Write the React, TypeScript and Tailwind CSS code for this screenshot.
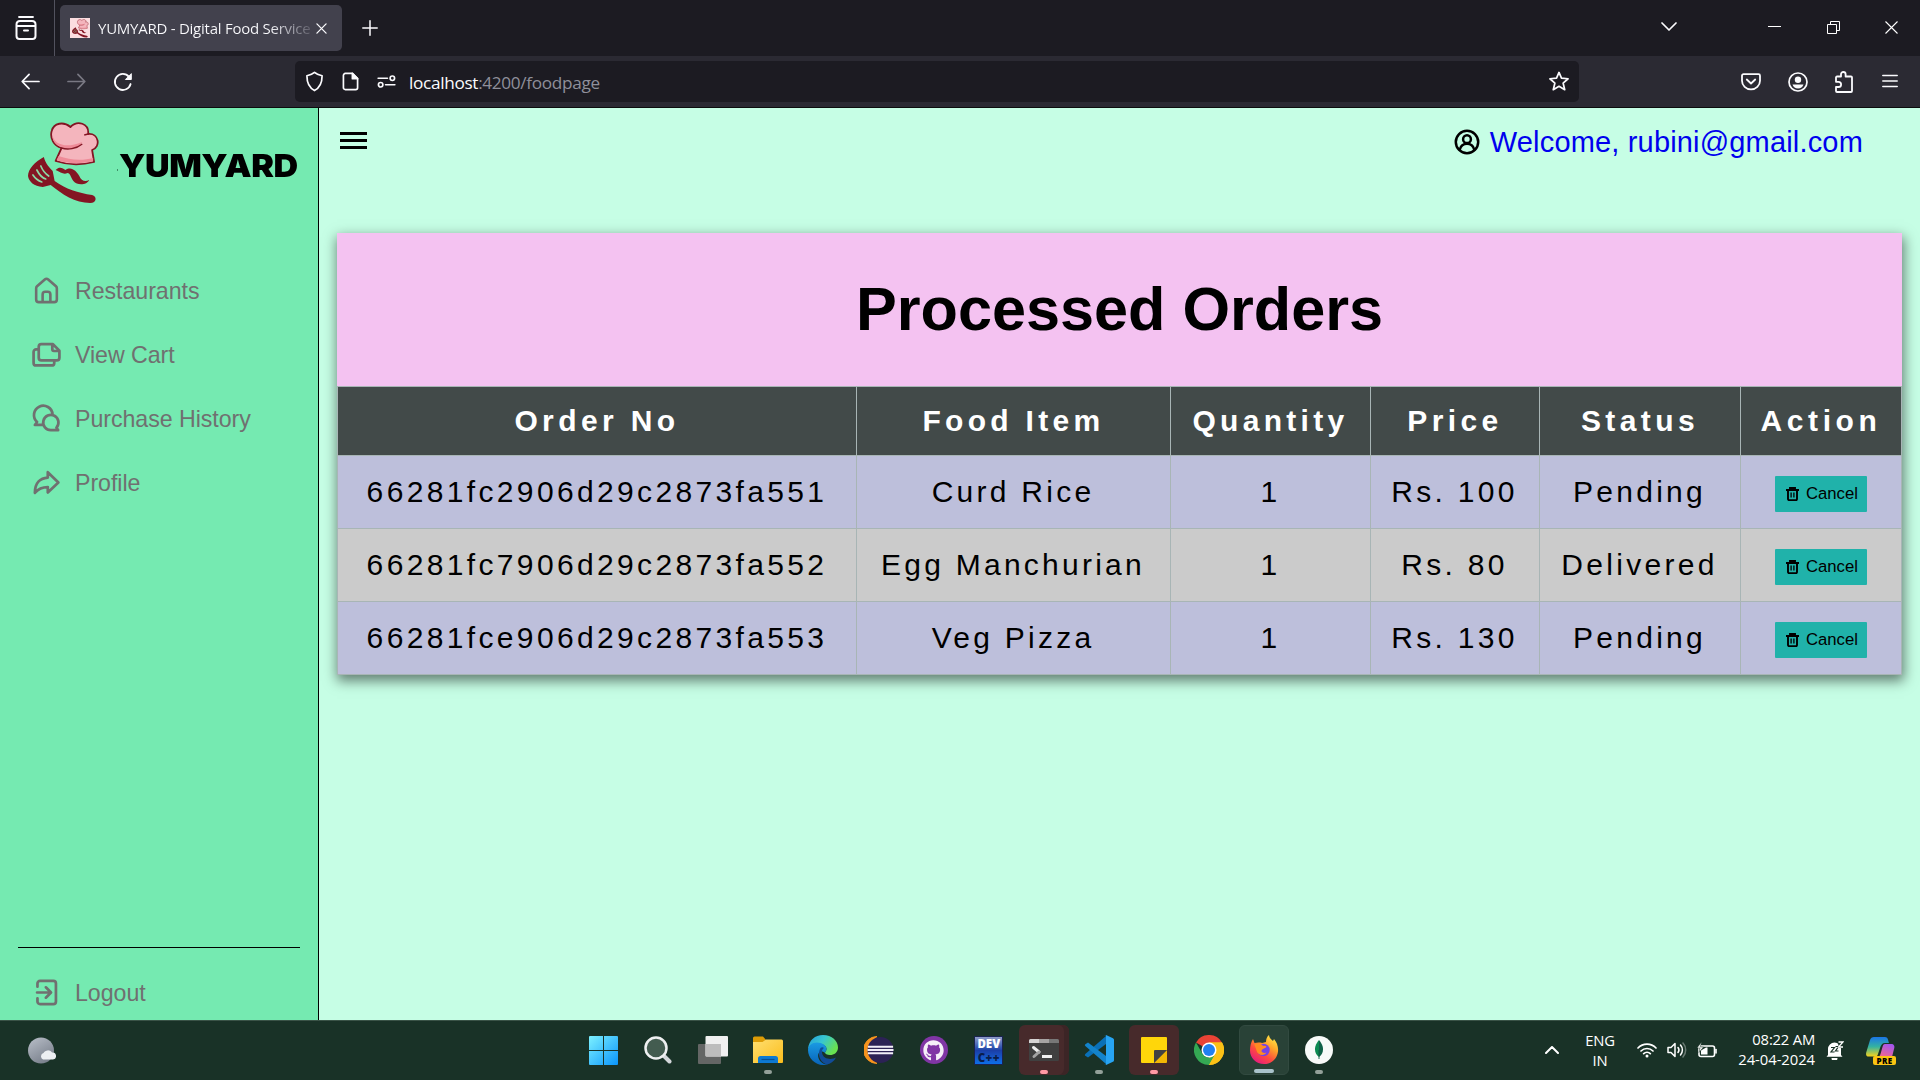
import React from "react";
import { FaGithub } from "react-icons/fa";

const line = {
  fill: "none",
  stroke: "currentColor",
  strokeWidth: 2,
  strokeLinecap: "round" as const,
  strokeLinejoin: "round" as const,
};

/* ---------- Logo ---------- */

function ChefLogo({ className }: { className: string }) {
  return (
    <svg viewBox="0 0 74 84" preserveAspectRatio="none" className={className}>
      <path
        d="M28 40 L34 27 C26 25 22 17 24 10 C26 2 36 0 43 6 C50 -1 62 2 61 13 C72 12 74 26 65 29 L67 41 C55 44 40 44 28 40Z"
        fill="#f4b5bd"
        stroke="#841523"
        strokeWidth="1.8"
        strokeLinejoin="round"
      />
      <path d="M25 15 C27 23 38 28 55 21 C50 28 40 29 34 26 C28 24 25 20 25 15Z M31 35 C42 39 55 40 66 37 L66 40 C55 43 40 43 29 39Z" fill="#ee8b98" />
      <path d="M34 27 C40 29 49 28 55 23 M61 13 L57 14" fill="none" stroke="#841523" strokeWidth="1.4" />
      <path d="M28 49 C32 45 35 47 38 49 C44 45 49 50 52 55 C54 60 58 61 62 59 C60 64 50 65 46 60 C43 56 43 52 40 52 C36 54 33 51 28 49Z" fill="#841523" />
      <path
        d="M16 36 C7 41 0 48 0 55 C1 61 6 65 15 66 L23 64 C34 73 48 82 63 82 C70 82 70 75 65 74 C51 72 38 68 27 60 L25 50 C22 47 18 43 16 36Z"
        fill="#841523"
      />
      <path d="M5 54 C7 57 11 60 14 61 M9 49 C11 53 15 57 18 58 M13 45 C15 50 18 53 21 55" fill="none" stroke="#8bd9a5" strokeWidth="1.7" strokeLinecap="round" />
    </svg>
  );
}

/* ---------- Browser chrome ---------- */

function TabBar() {
  return (
    <div className="flex h-14 w-full shrink-0 items-center bg-[#1c1b22] text-[#fbfbfe]">
      <div className="flex h-full w-[55px] shrink-0 items-center justify-center border-r border-[#52525e] pr-[3px]">
        <svg viewBox="0 0 22 24" className="h-6 w-[22px]" {...line}>
          <path d="M4 1h14" strokeWidth="1.8" />
          <path d="M1.500 8.500C1.500 6 3 5 5 5h12c2 0 3.500 1 3.500 3.500V20a3 3 0 0 1-3 3h-13a3 3 0 0 1-3-3zM1.500 10h19M9 14.500h4" />
        </svg>
      </div>
      <div className="ml-[5px] flex h-[46px] w-[282px] items-center rounded-[5px] bg-[#42414d] pl-[10px]">
        <div className="flex h-5 w-5 items-center justify-center bg-[#fbdde0]">
          <ChefLogo className="h-[19px] w-[17px]" />
        </div>
        <div className="ml-2 w-[214px] overflow-hidden whitespace-nowrap bg-gradient-to-r from-[#fbfbfe] from-80% to-[#5b5a66] bg-clip-text font-['Open_Sans',sans-serif] text-[15px] leading-6 tracking-[-0.25px] text-transparent">
          YUMYARD - Digital Food Service
        </div>
        <svg viewBox="0 0 12 12" className="ml-1 h-[11px] w-[11px] shrink-0" {...line} strokeWidth="1.4">
          <path d="M1 1l10 10M11 1L1 11" />
        </svg>
      </div>
      <svg viewBox="0 0 16 16" className="ml-5 h-4 w-4" {...line} strokeWidth="1.5">
        <path d="M8 .8v14.4M.8 8h14.4" />
      </svg>
      <div className="grow" />
      <svg viewBox="0 0 16 10" className="mr-[91px] mb-[2px] h-[10px] w-4" {...line} strokeWidth="1.7">
        <path d="M1 1l7 7 7-7" />
      </svg>
      <svg viewBox="0 0 13 13" className="mb-[3px] mr-[46px] h-[13px] w-[13px]">
        <path d="M0 6.5h13" stroke="#fff" strokeWidth="1" />
      </svg>
      <svg viewBox="0 0 13 13" className="mb-px mr-[45px] h-[13px] w-[13px]" fill="none" stroke="#fff">
        <path d="M.5 3.5h9v9h-9zM3.5 3.500V.5h9v9h-3" />
      </svg>
      <svg viewBox="0 0 13 13" className="mb-px mr-[22px] h-[13px] w-[13px]" fill="none" stroke="#fff" strokeWidth="1.1">
        <path d="M.5 .5l12 12M12.500 .5l-12 12" />
      </svg>
    </div>
  );
}

function ToolBar() {
  return (
    <div className="flex h-[52px] w-full shrink-0 items-center border-b border-[#0c0c0d] bg-[#2b2a33] text-[#fbfbfe]">
      <svg viewBox="0 0 20 18" className="ml-[21px] h-[17px] w-[19px]" {...line} strokeWidth="1.8">
        <path d="M19 9H1.500M8.500 1.500L1.200 9l7.300 7.500" />
      </svg>
      <svg viewBox="0 0 20 18" className="ml-[27px] h-[17px] w-[19px] text-[#797883]" {...line} strokeWidth="1.8">
        <path d="M1 9h17.500M11.500 1.500L18.800 9l-7.300 7.500" />
      </svg>
      <svg viewBox="0 0 20 20" className="ml-[27px] h-5 w-5" {...line} strokeWidth="1.8">
        <path d="M17.600 12A8 8 0 1 1 16 4.800" />
        <path d="M18.300 2v5.500h-5.500z" fill="currentColor" strokeWidth="1" />
      </svg>
      <div className="ml-[162px] flex h-[41px] w-[1284px] items-center rounded-[5px] bg-[#1c1b22]">
        <svg viewBox="0 0 20 22" className="ml-[10px] h-[21px] w-[19px]" {...line} strokeWidth="1.8">
          <path d="M10 1.500c2.400 2.200 5 2.800 8 3.500 0 7-2 12.500-8 15.500C4 17.500 2 12 2 5c3-.7 5.600-1.300 8-3.500z" />
        </svg>
        <svg viewBox="0 0 18 20" className="ml-[18px] h-[19px] w-[17px]" {...line} strokeWidth="1.8">
          <path d="M3.500 1.500H11l5.500 5.500v9.500a2 2 0 0 1-2 2h-11a2 2 0 0 1-2-2v-13a2 2 0 0 1 2-2z" />
          <path d="M11 1.500V7h5.500z" fill="currentColor" />
        </svg>
        <svg viewBox="0 0 20 14" className="ml-[18px] h-[13px] w-[19px]" {...line} strokeWidth="1.8">
          <path d="M1 3.500h10M9 10.500h10" />
          <circle cx="16.300" cy="3.500" r="2.400" />
          <circle cx="3.700" cy="10.500" r="2.400" />
        </svg>
        <div className="ml-[13px] mt-[2px] whitespace-nowrap font-['Open_Sans',sans-serif] text-[17.2px] leading-6 tracking-[-0.32px] text-[#8f8f9a]">
          <span className="text-[#fbfbfe]">localhost</span>:4200/foodpage
        </div>
        <div className="grow" />
        <svg viewBox="0 0 22 22" className="mr-[9px] h-[21px] w-[22px]" {...line} strokeWidth="1.8">
          <path d="M11 1.500l2.600 6 6.900.6-5.200 4.500 1.700 7-6-3.600-6 3.600 1.700-7L1.500 8.100l6.900-.6z" />
        </svg>
      </div>
      <div className="grow" />
      <svg viewBox="0 0 20 18" className="mr-[27px] h-[18px] w-5" {...line} strokeWidth="1.800">
        <path d="M2.500 1.200h15a1.500 1.500 0 0 1 1.500 1.500v5a9 8.700 0 0 1-18 0v-5A1.500 1.500 0 0 1 2.500 1.200zM5.800 6.500L10 10.500l4.200-4" />
      </svg>
      <svg viewBox="0 0 20 20" className="mr-[26px] h-5 w-5" {...line} strokeWidth="1.7">
        <circle cx="10" cy="10" r="9" />
        <circle cx="10" cy="7.700" r="3.200" fill="currentColor" stroke="none" />
        <path d="M4.500 12.500h11a5.800 5.800 0 0 1-11 0z" fill="currentColor" stroke="none" />
      </svg>
      <svg viewBox="0 0 20 22" className="mr-[28px] h-[22px] w-5" {...line} strokeWidth="1.800">
        <path d="M3 5.500h4V3.300a2.300 2.300 0 0 1 4.600 0v2.200H17a1 1 0 0 1 1 1V20a1 1 0 0 1-1 1H3a1 1 0 0 1-1-1v-4h2.500a2.600 2.600 0 0 0 0-5.200H2V6.500a1 1 0 0 1 1-1z" />
      </svg>
      <svg viewBox="0 0 16 14" className="mr-[22px] mb-[2px] h-[14px] w-4" {...line} strokeWidth="1.500">
        <path d="M.8 1.500h14.400M.8 7h14.400M.8 12.500h14.400" />
      </svg>
    </div>
  );
}

/* ---------- Sidebar ---------- */

const navItems = [
  {
    label: "Restaurants",
    icon: (
      <path
        fill="currentColor"
        stroke="none"
        d="M20,8h0L14,2.740a3,3,0,0,0-4,0L4,8a3,3,0,0,0-1,2.260V19a3,3,0,0,0,3,3H18a3,3,0,0,0,3-3V10.250A3,3,0,0,0,20,8ZM14,20H10V15a1,1,0,0,1,1-1h2a1,1,0,0,1,1,1Zm5-1a1,1,0,0,1-1,1H16V15a3,3,0,0,0-3-3H11a3,3,0,0,0-3,3v5H6a1,1,0,0,1-1-1V10.250a1,1,0,0,1,.34-.75l6-5.250a1,1,0,0,1,1.320,0l6,5.250a1,1,0,0,1,.34.75Z"
      />
    ),
  },
  {
    label: "View Cart",
    icon: (
      <path d="M17 4H8a2 2 0 0 0-2 2v8.500a2 2 0 0 0 2 2h12a2 2 0 0 0 2-2V9l-5-5zM16.500 4.500V8a1.300 1.300 0 0 0 1.300 1.300H22M6 8H4a2 2 0 0 0-2 2v8.500a2 2 0 0 0 2 2h12a2 2 0 0 0 2-2v-2" />
    ),
  },
  {
    label: "Purchase History",
    icon: (
      <path d="M8.500 17H3l1.700-2.300A7.200 7.200 0 1 1 16.700 8.900M15.500 21H21l-1.300-1.900A5.900 5.900 0 1 0 15.500 21z" />
    ),
  },
  {
    label: "Profile",
    icon: <path d="M13 4l8.200 8-8.200 7.700v-4.200C8.500 15.500 5.500 17 3 20 3 12.500 7 8.600 13 8.200z" />,
  },
];

function NavRow({ label, icon }: { label: string; icon: React.ReactNode }) {
  return (
    <div className="flex h-16 items-center pl-[31px] text-[#707070]">
      <svg viewBox="0 0 24 24" className="mb-[2px] h-[31px] w-[31px]" {...line} strokeWidth="2.1">
        {icon}
      </svg>
      <span className="ml-[13px] whitespace-nowrap text-[23.2px] leading-8 tracking-[-0.05px]">{label}</span>
    </div>
  );
}

function Sidebar() {
  return (
    <aside className="flex w-[319px] shrink-0 flex-col border-r border-black bg-[#75eab1]">
      <div className="flex h-[151px] items-start pl-[28px] pt-[13px]">
        <ChefLogo className="h-[84px] w-[73px] shrink-0" />
        <span className="ml-4 mt-[48px] h-[2px] w-px shrink-0 bg-[#3f8f68]" />
        <span className="ml-[1px] mt-[25px] origin-left scale-x-[1.065] whitespace-nowrap font-['Inter',sans-serif] text-[32px] font-black leading-10 tracking-[-0.4px] text-black">
          YUMYARD
        </span>
      </div>
      <nav>
        {navItems.map((item) => (
          <NavRow key={item.label} label={item.label} icon={item.icon} />
        ))}
      </nav>
      <div className="grow" />
      <div className="mx-[18px] border-t border-black" />
      <div className="h-[72px] shrink-0 pt-[13px]">
        <NavRow
          label="Logout"
          icon={
            <path d="M5 7.500V5a2 2 0 0 1 2-2h10.300a2 2 0 0 1 2 2v14a2 2 0 0 1-2 2H7a2 2 0 0 1-2-2v-2.500M4.700 12H15M11.500 8l4 4-4 4" />
          }
        />
      </div>
    </aside>
  );
}

/* ---------- Orders ---------- */

const columns = [
  { title: "Order No", width: "w-[519px]", tracking: "tracking-[4.4px]" },
  { title: "Food Item", width: "w-[314px]", tracking: "tracking-[4.3px]" },
  { title: "Quantity", width: "w-[200px]", tracking: "tracking-[4.3px]" },
  { title: "Price", width: "w-[169px]", tracking: "tracking-[4.4px]" },
  { title: "Status", width: "w-[201px]", tracking: "tracking-[4.4px]" },
  { title: "Action", width: "w-[161px]", tracking: "tracking-[4.6px]" },
];

const orders = [
  { id: "66281fc2906d29c2873fa551", food: "Curd Rice", qty: "1", price: "Rs. 100", status: "Pending", bg: "bg-[#bdbfdb]" },
  { id: "66281fc7906d29c2873fa552", food: "Egg Manchurian", qty: "1", price: "Rs. 80", status: "Delivered", bg: "bg-[#cbcbcb]" },
  { id: "66281fce906d29c2873fa553", food: "Veg Pizza", qty: "1", price: "Rs. 130", status: "Pending", bg: "bg-[#bdbfdb]" },
];

function Cell({ width, children }: { width: string; children: React.ReactNode }) {
  return (
    <div className={`flex shrink-0 items-center justify-center whitespace-nowrap border-l border-t border-[#a8b5b5] pb-[2px] ${width}`}>
      {children}
    </div>
  );
}

function CancelButton() {
  return (
    <button className="mt-[5px] flex h-9 w-[92px] items-center rounded-[1px] bg-[#20b2aa] pl-[11px] text-[16.7px] leading-5 tracking-normal text-black">
      <svg viewBox="0 0 13 14" className="mr-[7px] h-[14px] w-[13px]" fill="none" stroke="#000" strokeWidth="1.900">
        <path d="M0 3h13M4 3V1h5v2M2 3v9a1.200 1.200 0 0 0 1.200 1.200h6.600A1.200 1.200 0 0 0 11 12V3" />
        <path d="M5.100 5.500v5M7.900 5.500v5" strokeWidth="1.300" />
      </svg>
      Cancel
    </button>
  );
}

function Orders() {
  return (
    <section className="ml-[18px] flex w-[1565px] flex-col shadow-[1px_5px_12px_1px_rgba(0,0,0,0.5)]">
      <h1 className="flex h-[153px] items-center justify-center bg-[#f4c2f1] text-[61.2px] font-bold leading-none text-black">
        Processed Orders
      </h1>
      <div className="flex flex-col border-b border-r border-[#a8b5b5]">
        <div className="flex h-[69px] bg-[#424a49] text-[30px] font-bold text-white">
          {columns.map((c) => (
            <Cell key={c.title} width={c.width}>
              <span className={`mt-px ${c.tracking}`}>{c.title}</span>
            </Cell>
          ))}
        </div>
        {orders.map((o) => (
          <div key={o.id} className={`flex h-[73px] text-[30px] text-black ${o.bg}`}>
            <Cell width={columns[0].width}>
              <span className="tracking-[3.35px]">{o.id}</span>
            </Cell>
            <Cell width={columns[1].width}>
              <span className="pr-px tracking-[3.25px]">{o.food}</span>
            </Cell>
            <Cell width={columns[2].width}>
              <span className="tracking-[3.3px]">{o.qty}</span>
            </Cell>
            <Cell width={columns[3].width}>
              <span className="pr-px tracking-[3.3px]">{o.price}</span>
            </Cell>
            <Cell width={columns[4].width}>
              <span className="pr-px tracking-[3.3px]">{o.status}</span>
            </Cell>
            <Cell width={columns[5].width}>
              <CancelButton />
            </Cell>
          </div>
        ))}
      </div>
    </section>
  );
}

function Main() {
  return (
    <main className="flex grow flex-col bg-[#c6fee5]">
      <header className="flex h-[125px] shrink-0 items-start pl-[20px] pr-[57px]">
        <svg viewBox="0 0 28 17" className="mt-[24px] h-[17px] w-7" {...line} strokeWidth="3" strokeLinecap="butt">
          <path d="M1 1.500h27M1 8.500h27M1 15.500h27" />
        </svg>
        <div className="grow" />
        <svg viewBox="0 0 26 26" className="mt-[21px] h-[26px] w-[26px]" {...line} strokeWidth="2.500">
          <circle cx="13" cy="13" r="11.200" />
          <circle cx="13" cy="10.200" r="3.900" />
          <path d="M5.800 20.500c1-4 4-5.800 7.200-5.800s6.200 1.800 7.200 5.800" />
        </svg>
        <a className="ml-[10px] mt-[14px] whitespace-nowrap text-[29px] leading-10 tracking-[0.17px] text-[#0000ee]">
          Welcome, rubini@gmail.com
        </a>
      </header>
      <Orders />
    </main>
  );
}

/* ---------- Taskbar ---------- */

function StartIcon() {
  return (
    <svg viewBox="0 0 29 29" className="h-[29px] w-[29px]">
      <defs>
        <linearGradient id="start" x1="0" y1="0" x2="1" y2="1">
          <stop offset="0" stopColor="#7df1ff" />
          <stop offset="1" stopColor="#0a95fb" />
        </linearGradient>
      </defs>
      <path d="M0 1a1 1 0 0 1 1-1h13v14H0zM15 0h13a1 1 0 0 1 1 1v13H15zM0 15h14v14H1a1 1 0 0 1-1-1zM15 15h14v13a1 1 0 0 1-1 1H15z" fill="url(#start)" />
    </svg>
  );
}

function SearchIcon() {
  return (
    <svg viewBox="0 0 28 28" className="h-[28px] w-[28px]">
      <path d="M19 19l6.500 6.500" stroke="#d3d7da" strokeWidth="4" strokeLinecap="round" />
      <circle cx="12" cy="12" r="10.500" fill="#435c50" stroke="#eef0f1" strokeWidth="2.500" />
    </svg>
  );
}

function TaskViewIcon() {
  return (
    <svg viewBox="0 0 30 28" className="h-7 w-[30px]">
      <rect x="0" y="8" width="23" height="20" rx="1" fill="#646665" />
      <rect x="7.500" y="0" width="22.500" height="20.500" rx="1" fill="#f0f0f0" />
      <path d="M7.500 8H23v12.500H8.500a1 1 0 0 1-1-1z" fill="#bdbdbd" />
    </svg>
  );
}

function ExplorerIcon() {
  return (
    <svg viewBox="0 0 30 28" className="h-7 w-[30px]">
      <defs>
        <linearGradient id="folder" x1="0" y1="0" x2="1" y2="1">
          <stop offset="0" stopColor="#ffdf70" />
          <stop offset="1" stopColor="#fbbd1c" />
        </linearGradient>
      </defs>
      <path d="M0 2a1.500 1.500 0 0 1 1.500-1.500H10L13 4v4H0z" fill="#dd9c06" />
      <path d="M0 6h9.500L13 3.500h15.500A1.500 1.500 0 0 1 30 5v21a1 1 0 0 1-1 1H0z" fill="url(#folder)" />
      <path d="M5 27v-4.500A2.500 2.500 0 0 1 7.500 20h15a2.500 2.500 0 0 1 2.500 2.500V27z" fill="#0d79d2" />
      <path d="M8.500 23.500h13" stroke="#084f93" strokeWidth="1.200" />
    </svg>
  );
}

function EdgeIcon() {
  return (
    <svg viewBox="0 0 30 30" className="h-[30px] w-[30px]">
      <defs>
        <linearGradient id="edgeTop" x1="0" y1="0" x2="1" y2=".5">
          <stop offset="0" stopColor="#229ddd" />
          <stop offset=".5" stopColor="#38c6d0" />
          <stop offset="1" stopColor="#69e250" />
        </linearGradient>
        <linearGradient id="edgeSide" x1="0" y1="0" x2="0" y2="1">
          <stop offset="0" stopColor="#1a9ae3" />
          <stop offset="1" stopColor="#0863b8" />
        </linearGradient>
      </defs>
      <path d="M0 14C1 5 7 0 15 0c9 0 15 6 15 12.500 0 5-4 7.500-8 7.500-3 0-5-1-5-2.500 0-1 1.500-1.500 1.500-3.500C18.500 10 13 8 8 9 4 10 1 12 0 14z" fill="url(#edgeTop)" />
      <path d="M0 15c0-4 4-7.500 9-7.500 5.500 0 9.500 3 9.500 6.500 0 2-1.500 2.500-1.500 4-5-4-8 1-6.500 5 1.500 5 7 7 10 6.500-2 .5-3.500.5-5.500.5C7 30 0 23 0 15z" fill="url(#edgeSide)" />
      <path d="M12.500 13c-3 5-2 13 6 16.500 4-.5 7.500-3 9.500-7-3 2-13 3-14-5-.3-2 .5-3.500 2-4.500-1-1-2.500-1-3.500 0z" fill="#114c98" />
    </svg>
  );
}

function EclipseIcon() {
  return (
    <svg viewBox="0 0 30 28" className="h-7 w-[30px]">
      <path d="M13 .5A13.500 13.500 0 0 0 13 27.500 17 17 0 0 1 13 .5z" fill="#f7941e" stroke="#f7941e" strokeWidth="1" />
      <circle cx="16.500" cy="14" r="13" fill="#2c2255" />
      <path d="M3.900 10.800h25.200M3.500 14h26M3.900 17.200h25.200" stroke="#f2eff8" strokeWidth="1.900" />
    </svg>
  );
}

function GithubDesktopIcon() {
  return (
    <div className="flex h-7 w-7 items-center justify-center rounded-full bg-[#8035a5] text-[#f5eff8]">
      <FaGithub size={21} />
    </div>
  );
}

function DevIcon() {
  return (
    <div className="flex h-[29px] w-[29px] flex-col items-center justify-between border border-[#1a2350] bg-gradient-to-b from-[#8f9bc8] via-[#1a3fa8] to-[#0b6fe8] font-['Open_Sans',sans-serif] text-[11.5px] font-extrabold leading-[13px]">
      <span className="text-white">DEV</span>
      <span className="tracking-[0.300px] text-[#0a1d4a]">C++</span>
    </div>
  );
}

function TerminalIcon() {
  return (
    <svg viewBox="0 0 30 22" className="h-[22px] w-[30px]">
      <rect width="30" height="22" rx="1.500" fill="#404040" />
      <path d="M1.500 0H10v4H0V1.500A1.500 1.500 0 0 1 1.500 0z" fill="#d5d3d3" />
      <path d="M10 0h10v4H10z" fill="#a6a3a3" />
      <path d="M20 0h8.500A1.500 1.500 0 0 1 30 1.500V4H20z" fill="#777" />
      <path d="M4.500 8.500L10 13" stroke="#ececec" strokeWidth="3" strokeLinecap="round" />
      <path d="M10 13l-5 4.500" stroke="#a3a3a3" strokeWidth="3" strokeLinecap="round" />
      <path d="M13 17.500h10" stroke="#efefef" strokeWidth="3" />
    </svg>
  );
}

function CodeIcon() {
  return (
    <svg viewBox="0 0 30 30" className="h-[30px] w-[30px]">
      <path d="M22 1L22 9 4 22.500 1.300 20.800a1.200 1.200 0 0 1 0-1.800z" fill="#0a70b8" />
      <path d="M22 29v-8L4 7.500 1.300 9.200a1.200 1.200 0 0 0 0 1.800z" fill="#1383cb" />
      <path d="M22 0l7 3.200a1.800 1.800 0 0 1 1 1.600v20.400a1.800 1.800 0 0 1-1 1.600L22 30c-.8.3-1.500-.3-1.500-.3 1 .8 1.500 0 1.500-.7V1c0-.8-.7-1.500-1.500-.7 0 0 .8-.6 1.500-.3z" fill="#27a4f2" />
    </svg>
  );
}

function NotesIcon() {
  return (
    <svg viewBox="0 0 26 26" className="h-[26px] w-[26px]">
      <path d="M0 1a1 1 0 0 1 1-1h24a1 1 0 0 1 1 1v12L13 26H1a1 1 0 0 1-1-1z" fill="#ffd60a" />
      <path d="M26 13v12a1 1 0 0 1-1 1H13z" fill="#f2b705" />
      <path d="M13 26V14a1 1 0 0 1 1-1h12z" fill="#424242" />
    </svg>
  );
}

function ChromeIcon() {
  return (
    <svg viewBox="0 0 30 30" className="h-[30px] w-[30px]">
      <path d="M15 15L2 7.500A15 15 0 0 1 28 7.500z" fill="#e94335" />
      <path d="M15 15V7.500h13A15 15 0 0 1 15 30z" fill="#fbc116" />
      <path d="M15 30A15 15 0 0 1 2 7.500l6.500 11.200A7.500 7.500 0 0 0 21.500 18.700z" fill="#34a853" />
      <path d="M21.500 18.700L15 30A15 15 0 0 0 28 7.500H15z" fill="#fbc116" />
      <circle cx="15" cy="15" r="7.500" fill="#fff" />
      <circle cx="15" cy="15" r="6" fill="#2180f0" />
    </svg>
  );
}

function FirefoxIcon() {
  return (
    <svg viewBox="0 0 30 30" className="h-[30px] w-[30px]">
      <defs>
        <linearGradient id="fox" x1=".85" y1="0" x2=".2" y2="1">
          <stop offset="0" stopColor="#fff04a" />
          <stop offset=".35" stopColor="#ffa329" />
          <stop offset=".65" stopColor="#ff4a3f" />
          <stop offset="1" stopColor="#e11587" />
        </linearGradient>
      </defs>
      <path d="M4 4l1.500 4L9.500 7.500c1.500-.2 3 0 3.500.5l4-1c0-3 1-5.500 3-7 .3 3 2 4 4 6l1-2c3 3.500 4.500 8 4 12.500C28 24 22.500 29 15 29 7 29 1 23 1 15.500 1 11 2 7 4 4z" fill="url(#fox)" />
      <circle cx="14.500" cy="15" r="6.200" fill="#7542e5" />
      <path d="M5.500 9c4-1.500 7.500 0 8.500 2 3-.5 4 .5 3 1.500-2 1-4.500 1.500-4.500 3.500 0 1.500 2.500 2.500 5 1.500-2 4-9 3-10-2-.5-3-2-4.500-2-6.500z" fill="#ff8b21" />
    </svg>
  );
}

function MongoIcon() {
  return (
    <div className="flex h-7 w-7 items-center justify-center rounded-full bg-[#f8faf9]">
      <svg viewBox="0 0 10 20" className="h-5 w-[10px]">
        <path d="M5 0c3.500 4.500 4 7 4 9.500 0 3-1.500 5.500-4 7.500z" fill="#116149" />
        <path d="M5 0C1.500 4.500 1 7 1 9.500c0 3 1.500 5.500 4 7.500z" fill="#0d8a52" />
        <path d="M5 10v9" stroke="#0d5b42" strokeWidth=".9" />
      </svg>
    </div>
  );
}

const apps = [
  { key: "start", icon: <StartIcon />, tile: "", dot: "" },
  { key: "search", icon: <SearchIcon />, tile: "", dot: "" },
  { key: "tasks", icon: <TaskViewIcon />, tile: "", dot: "" },
  { key: "files", icon: <ExplorerIcon />, tile: "", dot: "w-2 bg-[#93a099]" },
  { key: "edge", icon: <EdgeIcon />, tile: "", dot: "" },
  { key: "eclipse", icon: <EclipseIcon />, tile: "", dot: "" },
  { key: "github", icon: <GithubDesktopIcon />, tile: "", dot: "" },
  { key: "dev", icon: <DevIcon />, tile: "", dot: "" },
  { key: "terminal", icon: <TerminalIcon />, tile: "bg-[#472a2b] shadow-[inset_-5px_0_0_#3c2526]", dot: "w-2 bg-[#ff99a4]" },
  { key: "code", icon: <CodeIcon />, tile: "", dot: "w-2 bg-[#93a099]" },
  { key: "notes", icon: <NotesIcon />, tile: "bg-[#472a2b]", dot: "w-2 bg-[#ff99a4]" },
  { key: "chrome", icon: <ChromeIcon />, tile: "", dot: "" },
  { key: "firefox", icon: <FirefoxIcon />, tile: "bg-[#294237] border border-[#324a40]", dot: "w-5 bg-[#a9c3cb]" },
  { key: "mongo", icon: <MongoIcon />, tile: "", dot: "w-2 bg-[#93a099]" },
];

function Taskbar() {
  return (
    <footer className="flex h-[60px] w-full shrink-0 items-center border-t border-[#3a5347] bg-[#193227] pb-px font-['Open_Sans',sans-serif] text-white">
      <div className="w-[575px] shrink-0 pl-[28px]">
        <svg viewBox="0 0 28 27" className="h-[27px] w-7">
          <defs>
            <linearGradient id="moon" x1=".2" y1="0" x2=".8" y2="1">
              <stop offset="0" stopColor="#b4bac4" />
              <stop offset="1" stopColor="#747b87" />
            </linearGradient>
          </defs>
          <circle cx="13" cy="13.500" r="13" fill="url(#moon)" />
          <path d="M15 22.500a3.500 3.500 0 0 1 .5-6.500 5 5 0 0 1 8.500-.5 3.500 3.500 0 0 1 1 7z" fill="#eceff2" />
        </svg>
      </div>
      {apps.map((a) => (
        <div key={a.key} className="flex w-[55.1px] shrink-0 justify-end pr-[2px]">
          <div className={`relative flex h-[50px] w-[50px] items-center justify-center rounded-md ${a.tile}`}>
            {a.icon}
            {a.dot && <span className={`absolute bottom-px h-1 rounded-full ${a.dot}`} />}
          </div>
        </div>
      ))}
      <div className="grow" />
      <svg viewBox="0 0 14 8" className="mr-[26px] h-2 w-[14px]" {...line}>
        <path d="M1 7l6-6 6 6" />
      </svg>
      <div className="mb-px w-[30px] text-center text-[14.800px] leading-5 tracking-[-0.200px]">
        ENG
        <br />
        IN
      </div>
      <svg viewBox="0 0 20 16" className="ml-[22px] h-4 w-5" {...line} strokeWidth="1.700">
        <path d="M1 6a12.500 12.500 0 0 1 18 0M4 9a8.500 8.500 0 0 1 12 0M6.700 11.700a4.700 4.700 0 0 1 6.600 0" />
        <circle cx="10" cy="14" r="1.500" fill="currentColor" stroke="none" />
      </svg>
      <svg viewBox="0 0 20 16" className="ml-[10px] h-4 w-5" {...line} strokeWidth="1.500">
        <path d="M1 5.500h3l4-4v13l-4-4H1zM11 5.500a4 4 0 0 1 0 5M13.500 3a7.500 7.500 0 0 1 0 10" />
        <path d="M16 1a10.500 10.500 0 0 1 0 14" opacity=".35" />
      </svg>
      <svg viewBox="0 0 20 16" className="ml-[10px] h-4 w-5" {...line} strokeWidth="1.600">
        <rect x="2" y="4" width="15.500" height="10.500" rx="2" />
        <path d="M19 7.500v3.500" />
        <path d="M4 12.500v-4l5-3h1.500v7z" fill="currentColor" stroke="none" />
        <path d="M4.500 0L0 6h3l-1 4.500L6.500 5h-3z" fill="#fff" stroke="#193227" strokeWidth=".5" />
      </svg>
      <div className="mb-[2px] ml-[18px] w-[80px] whitespace-nowrap text-right text-[14.800px] leading-5">
        <div className="tracking-[-0.200px]">08:22 AM</div>
        <div className="tracking-[-0.050px]">24-04-2024</div>
      </div>
      <svg viewBox="0 0 18 19" className="ml-[11px] h-[19px] w-[18px]">
        <path d="M2 14V8a6.500 6.500 0 0 1 13 0v6l1.500 1.800H.5z" fill="#fff" />
        <path d="M5.500 17h6a3 3 0 0 1-6 0z" fill="#fff" />
        <path d="M5 6.500h3.500L5 11h3.500M9.500 5.500h3L9.500 10h3" fill="none" stroke="#193227" strokeWidth="1.200" />
        <path d="M11.500 0h6.500v7h-5z" fill="#193227" />
        <path d="M12.500 1h4.500l-4.500 5H17" fill="none" stroke="#fff" strokeWidth="1.300" />
      </svg>
      <div className="relative ml-[22px] mr-[25px] mt-[2px] h-[28px] w-[29px]">
        <svg viewBox="0 0 29 28" className="h-7 w-[29px]">
          <defs>
            <linearGradient id="copA" x1="0" y1="0" x2="0" y2="1">
              <stop offset="0" stopColor="#1b76e8" />
              <stop offset=".5" stopColor="#34b3a0" />
              <stop offset="1" stopColor="#f6d31c" />
            </linearGradient>
            <linearGradient id="copB" x1=".7" y1="0" x2=".2" y2="1">
              <stop offset="0" stopColor="#a456ee" />
              <stop offset="1" stopColor="#f5688a" />
            </linearGradient>
          </defs>
          <path d="M8 0h11c3 0 3 3 4 6h-4c-3 0-4 2-5 5l-2 6c-.5 2-1.500 2.500-3 2.500H3c-3 0-3.500-2-2.500-5L4 3c.7-2 2-3 4-3z" fill="url(#copA)" />
          <path d="M19 7h6c3 0 4 2 3 5l-2 8H11c2 0 3-1 3.500-3l2-7c.5-2 1-3 2.500-3z" fill="url(#copB)" />
        </svg>
        <span className="absolute -right-px bottom-0 flex h-[9px] w-[23px] items-center justify-center rounded-[2px] bg-[#fbc512] text-[8px] font-extrabold leading-none tracking-[0.3px] text-black">
          PRE
        </span>
      </div>
    </footer>
  );
}

export default function App() {
  return (
    <div className="flex h-[1080px] w-[1920px] flex-col overflow-hidden font-['Liberation_Sans',Arial,sans-serif]">
      <TabBar />
      <ToolBar />
      <div className="flex h-[912px] shrink-0">
        <Sidebar />
        <Main />
      </div>
      <Taskbar />
    </div>
  );
}
